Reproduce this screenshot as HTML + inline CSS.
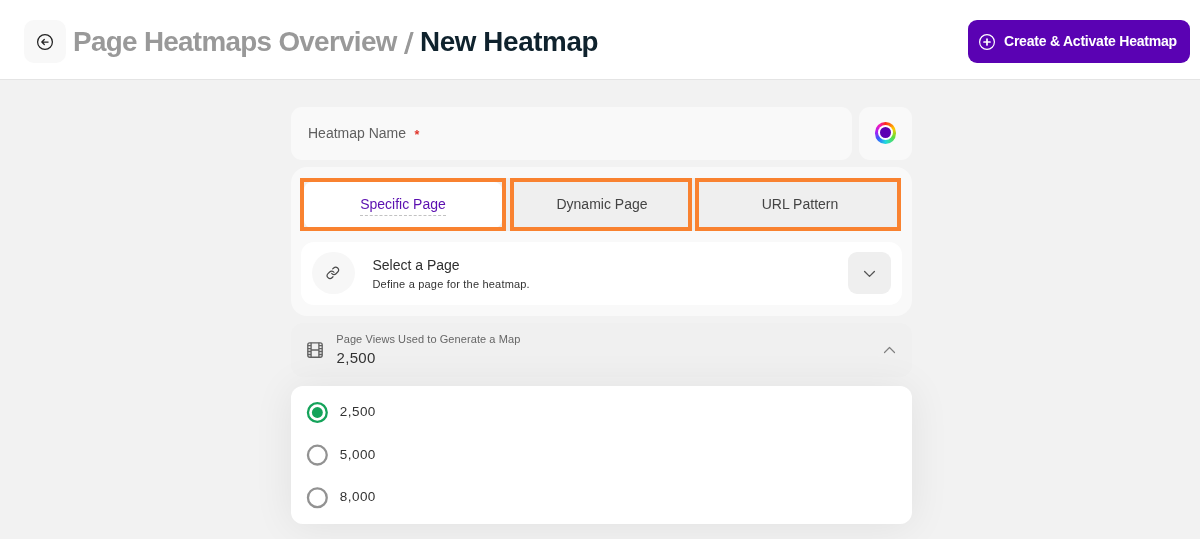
<!DOCTYPE html>
<html lang="en">
<head>
<meta charset="utf-8">
<title>New Heatmap</title>
<style>
*{box-sizing:border-box;margin:0;padding:0}
html,body{width:1200px;height:539px;overflow:hidden}
body{will-change:transform;background:#f2f2f2;font-family:"Liberation Sans",Arial,sans-serif;color:#333;position:relative}
.abs{position:absolute}
header{position:absolute;left:0;top:0;width:1200px;height:80px;background:#fff;border-bottom:1px solid #e4e4e4}
.back{position:absolute;left:23.7px;top:20px;width:42.4px;height:43.2px;border-radius:10px;background:#f8f8f8}
.back svg{position:absolute;left:12.2px;top:12.8px}
h1{position:absolute;left:0;top:25.1px;height:34px;line-height:34px;font-size:27.8px;font-weight:700;white-space:nowrap;color:#999}
h1 span,h1 b{position:absolute;top:0}
h1 .a{left:73.1px;letter-spacing:-0.675px}
h1 .s{left:403.9px;font-size:29.4px;top:1.5px;font-weight:400;transform:scaleX(1.12);transform-origin:0 50%;text-shadow:.5px 0 0 #999}
h1 b{left:420px;color:#0f222d;font-weight:700;letter-spacing:-.38px}
.cta{position:absolute;left:968px;top:20.4px;width:222.2px;height:42.3px;border-radius:9px;background:#5a02b3;color:#fff;font-size:14px;font-weight:700;line-height:43.8px;letter-spacing:-.22px;white-space:nowrap}
.cta svg{position:absolute;left:10px;top:12.4px}
.cta span{position:absolute;left:36px;top:0}
.name{position:absolute;left:291px;top:106.5px;width:561px;height:53px;border-radius:11px;background:#f9f9f9}
.name span{position:absolute;left:17px;top:.6px;line-height:53px;font-size:14px;color:#606060;white-space:nowrap}
.name i{font-style:normal;color:#e0352b;margin-left:4.5px;font-weight:700;font-size:12.5px;position:relative;top:.5px}
.color{position:absolute;left:859px;top:106.5px;width:53px;height:53px;border-radius:11px;background:#f9f9f9}
.wheel{position:absolute;left:15.7px;top:15.6px;width:21.8px;height:21.8px;border-radius:50%;background:conic-gradient(#ff2a1a,#ffc800 17%,#5fe03c 33%,#1ed8e0 50%,#3560ff 64%,#b41cf0 78%,#f21cb8 90%,#ff2a1a)}
.wheel:before{content:"";position:absolute;left:3.4px;top:3.4px;width:15px;height:15px;border-radius:50%;background:#fff}
.wheel:after{content:"";position:absolute;left:5.4px;top:5.4px;width:11px;height:11px;border-radius:50%;background:#5b00b3}
.card{position:absolute;left:291px;top:167px;width:621px;height:149px;border-radius:16px;background:#f9f9f9}
.tabs{position:absolute;left:9px;top:10.5px;width:601px;height:53.5px;border-radius:4px;background:#efefef}
.tab{position:absolute;top:2.5px;height:49px;line-height:49px;text-align:center;font-size:14px;color:#444;white-space:nowrap}
.tab.on{color:#5b0fb0}
.tab.on:before{content:"";position:absolute;left:1.5px;top:1.5px;width:198.6px;height:46px;border-radius:8px;background:#fff}
.tab.on span{position:relative}
.tab.on span{border-bottom:1px dashed #c2c2c2;padding-bottom:3px}
.hl{position:absolute;border:4px solid #f98230;pointer-events:none}
.row{position:absolute;left:10.2px;top:74.7px;width:600.7px;height:63.8px;border-radius:13px;background:#fff}
.ic{position:absolute;left:11px;top:10.3px;width:42.5px;height:42.5px;border-radius:50%;background:#f7f7f7}
.ic svg{position:absolute;left:14.2px;top:14.5px}
.t1{position:absolute;left:71.3px;top:14.3px;font-size:14px;line-height:18px;color:#2f2f2f;white-space:nowrap}
.t2{position:absolute;left:71.3px;top:35px;font-size:11px;line-height:14px;color:#333;white-space:nowrap;letter-spacing:.19px}
.dd{position:absolute;left:547.3px;top:10.3px;width:42.5px;height:42.5px;border-radius:9px;background:#efefef}
.dd svg{position:absolute;left:14.6px;top:17.9px}
.pv{position:absolute;left:291px;top:323px;width:621px;height:54px;border-radius:12px;background:#f0f0f0}
.pv svg.film{position:absolute;left:16px;top:19px}
.pv .l1{position:absolute;left:45.3px;top:9px;font-size:11px;line-height:14px;color:#666;white-space:nowrap;letter-spacing:.08px}
.pv .l2{position:absolute;left:45.6px;top:26px;font-size:15px;line-height:18px;color:#333;white-space:nowrap;letter-spacing:.3px}
.pv svg.up{position:absolute;left:592.2px;top:22.8px}
.opts{position:absolute;left:291px;top:385.5px;width:621px;height:138px;border-radius:12px;background:#fff;box-shadow:0 2px 40px rgba(0,0,0,.075)}
.opt{position:absolute;left:15.8px;height:21px;line-height:21px;font-size:13.5px;color:#333;white-space:nowrap;letter-spacing:.45px}
.rd{position:absolute;left:0;top:0;width:21px;height:21px;border-radius:50%;border:2.3px solid #929292;background:#fff}
.rd.on{border-color:#14a35a}
.rd.on:after{content:"";position:absolute;left:2.8px;top:2.8px;width:10.8px;height:10.8px;border-radius:50%;background:#14a35a}
.radios{position:absolute;left:0;top:0}
.opt span{position:absolute;left:33px;top:-.8px}
</style>
</head>
<body>
<header>
  <div class="back">
    <svg width="18" height="18" viewBox="0 0 18 18" fill="none" stroke="#222" stroke-width="1.25" stroke-linecap="round" stroke-linejoin="round"><circle cx="9" cy="9" r="7.4"/><path d="M12.1 9H5.9M8.3 6.5 5.8 9l2.5 2.5"/></svg>
  </div>
  <h1><span class="a">Page Heatmaps Overview</span> <span class="s">/</span> <b>New Heatmap</b></h1>
  <div class="cta">
    <svg width="18" height="18" viewBox="0 0 18 18" fill="none" stroke="#fff" stroke-width="1.2" stroke-linecap="round"><circle cx="9" cy="9" r="7.4"/><path d="M9 6v6M6 9h6" stroke-width="1.7"/></svg>
    <span>Create &amp; Activate Heatmap</span>
  </div>
</header>

<div class="name"><span>Heatmap Name <i>*</i></span></div>
<div class="color"><div class="wheel"></div></div>

<div class="card">
  <div class="tabs">
    <div class="tab on" style="left:2px;width:202px"><span>Specific Page</span></div>
    <div class="tab" style="left:211px;width:182px">Dynamic Page</div>
    <div class="tab" style="left:399px;width:202px">URL Pattern</div>
  </div>
  <div class="hl" style="left:9px;top:11px;width:206px;height:52.5px"></div>
  <div class="hl" style="left:219px;top:11px;width:182px;height:52.5px"></div>
  <div class="hl" style="left:404px;top:11px;width:206px;height:52.5px"></div>
  <div class="row">
    <div class="ic"><svg width="13.7" height="13.7" viewBox="0 0 24 24" fill="none" stroke="#484848" stroke-width="2.05" stroke-linecap="round" stroke-linejoin="round"><path d="M10 13a5 5 0 0 0 7.54.54l3-3a5 5 0 0 0-7.07-7.07l-1.72 1.71"/><path d="M14 11a5 5 0 0 0-7.54-.54l-3 3a5 5 0 0 0 7.07 7.07l1.71-1.71"/></svg></div>
    <div class="t1">Select a Page</div>
    <div class="t2">Define a page for the heatmap.</div>
    <div class="dd"><svg width="13" height="8" viewBox="0 0 13 8" fill="none" stroke="#555" stroke-width="1.3" stroke-linecap="round" stroke-linejoin="round"><path d="M1.6 1.5 6.5 6.4 11.4 1.5"/></svg></div>
  </div>
</div>

<div class="pv">
  <svg class="film" width="16" height="16" viewBox="0 0 16 16" fill="none" stroke="#626262" stroke-width="1.35" stroke-linejoin="round"><rect x=".8" y=".8" width="14.4" height="14.4" rx="2"/><path d="M4.1.8v14.4M11.9.8v14.4M4.1 8h7.8M.8 3.6h3.3M.8 6.6h3.3M.8 9.5h3.3M.8 12.5h3.3M11.9 3.6h3.3M11.9 6.6h3.3M11.9 9.5h3.3M11.9 12.5h3.3"/></svg>
  <div class="l1">Page Views Used to Generate a Map</div>
  <div class="l2">2,500</div>
  <svg class="up" width="13" height="8" viewBox="0 0 13 8" fill="none" stroke="#808080" stroke-width="1.2" stroke-linecap="round" stroke-linejoin="round"><path d="M1.5 6.5 6.5 1.5 11.5 6.5"/></svg>
</div>

<div class="opts">
  <svg class="radios" width="60" height="138" viewBox="0 0 60 138" fill="none">
    <circle cx="26.35" cy="26.5" r="9.4" stroke="#14a35a" stroke-width="2.3" fill="#fff"/>
    <circle cx="26.35" cy="26.5" r="5.45" fill="#14a35a"/>
    <circle cx="26.35" cy="69.1" r="9.4" stroke="#929292" stroke-width="2.3" fill="#fff"/>
    <circle cx="26.35" cy="111.7" r="9.4" stroke="#929292" stroke-width="2.3" fill="#fff"/>
  </svg>
  <div class="opt" style="top:16px"><span>2,500</span></div>
  <div class="opt" style="top:58.8px"><span>5,000</span></div>
  <div class="opt" style="top:101.2px"><span>8,000</span></div>
</div>
</body>
</html>
